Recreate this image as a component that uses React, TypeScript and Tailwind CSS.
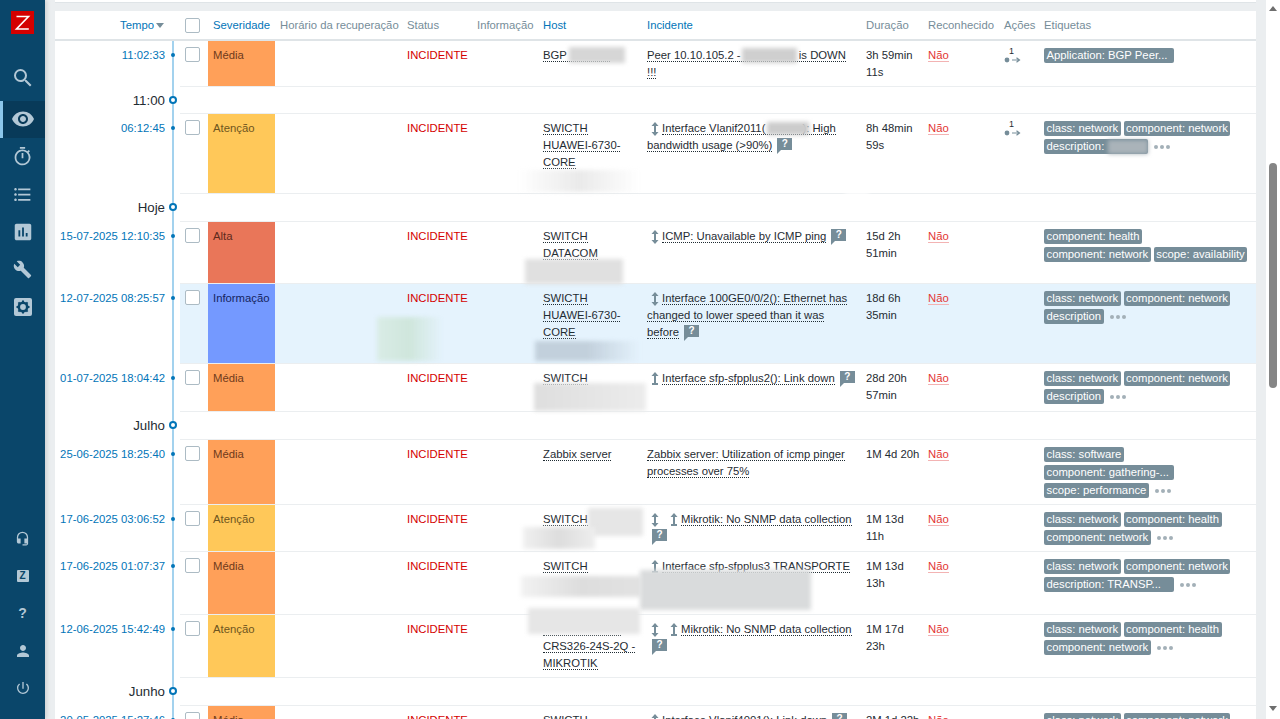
import * as React from "react"
import {
  MdSearch,
  MdVisibility,
  MdOutlineTimer,
  MdFormatListBulleted,
  MdAssessment,
  MdBuild,
  MdHeadsetMic,
  MdPerson,
  MdPowerSettingsNew,
} from "react-icons/md"

const COLS =
  "grid grid-cols-[28px_67px_127px_70px_66px_104px_219px_62px_76px_40px_217px]"

const SEV: Record<string, string> = {
  Média: "bg-[#ffa059] text-[#6e3a1c]",
  Atenção: "bg-[#ffc859] text-[#6e5520]",
  Alta: "bg-[#e97659] text-[#5e2a1c]",
  Informação: "bg-[#7499ff] text-[#14245e]",
}

function Link({ children }: { children: React.ReactNode }) {
  return <span className="border-b border-dotted border-[#1f2c33]">{children}</span>
}

function Gap({ className }: { className: string }) {
  return <span className={`inline-block ${className}`} />
}

function UpDown() {
  return (
    <svg viewBox="0 0 8 14" className="-my-[3px] mr-[3px] ml-[4px] inline-block h-[14px] w-[8px] align-[-1px]">
      <path d="M4 0 L7.5 4 H5 V10 H7.5 L4 14 L0.5 10 H3 V4 H0.5 Z" fill="#768d99" />
    </svg>
  )
}

function Up() {
  return (
    <svg viewBox="0 0 8 14" className="-my-[3px] mr-[3px] ml-[4px] inline-block h-[14px] w-[8px] align-[-1px]">
      <path d="M4 0 L7.5 4 H5 V11 H7 V13 H1 V11 H3 V4 H0.5 Z" fill="#768d99" />
    </svg>
  )
}

function Hint() {
  return (
    <span className="relative ml-[5px] inline-block h-[12px] w-[15px] bg-[#768d99] text-center align-[2px] text-[10px] leading-[12px] font-bold text-white after:absolute after:top-full after:left-0 after:border-t-[4px] after:border-r-[4px] after:border-t-[#768d99] after:border-r-transparent after:content-['']">
      ?
    </span>
  )
}

function Tag({ children, className = "" }: { children: React.ReactNode; className?: string }) {
  return (
    <span className={`block h-[15px] overflow-hidden rounded-[2px] bg-[#768d99] px-[2.5px] leading-[15px] whitespace-nowrap text-white ${className}`}>
      {children}
    </span>
  )
}

function More() {
  return (
    <span className="ml-[3px] flex h-[15px] items-center gap-[2px]">
      <i className="size-[4px] rounded-full bg-[#a3b0b8]" />
      <i className="size-[4px] rounded-full bg-[#a3b0b8]" />
      <i className="size-[4px] rounded-full bg-[#a3b0b8]" />
    </span>
  )
}

function Actions() {
  return (
    <div className="relative h-[20px] w-[18px]">
      <span className="absolute top-[-2px] left-[5px] text-[9px] leading-[12px] text-[#1f2c33]">1</span>
      <svg viewBox="0 0 18 8" className="absolute top-[9px] left-0 h-[8px] w-[18px]">
        <circle cx="3" cy="4" r="2.4" fill="#768d99" />
        <path d="M8 4 H15 M12.5 1.8 L15.5 4 L12.5 6.2" stroke="#768d99" strokeWidth="1.2" fill="none" />
      </svg>
    </div>
  )
}

type Row = {
  h: string
  time: string
  sev: string
  host: React.ReactNode
  inc: React.ReactNode
  dur: React.ReactNode
  acts?: boolean
  tags: React.ReactNode
  active?: boolean
}

const rows: (Row | { sep: string; h: string })[] = [
  {
    h: "h-[46px]",
    time: "11:02:33",
    sev: "Média",
    host: (
      <Link>
        BGP <Gap className="w-[40px]" />
      </Link>
    ),
    inc: (
      <Link>
        Peer 10.10.105.2 - <Gap className="w-[52px]" /> is DOWN
        <br />
        !!!
      </Link>
    ),
    dur: "3h 59min 11s",
    acts: true,
    tags: <Tag className="w-[130px]">Application: BGP Peer...</Tag>,
  },
  { sep: "11:00", h: "h-[27px]" },
  {
    h: "h-[80px]",
    time: "06:12:45",
    sev: "Atenção",
    host: <Link>SWICTH HUAWEI-6730-CORE</Link>,
    inc: (
      <>
        <UpDown />
        <Link>
          Interface Vlanif2011(<Gap className="w-[37px]" />
          ): High bandwidth usage (&gt;90%)
        </Link>
        <Hint />
      </>
    ),
    dur: "8h 48min 59s",
    acts: true,
    tags: (
      <>
        <Tag>class: network</Tag>
        <Tag>component: network</Tag>
        <Tag className="w-[104px]">description:</Tag>
        <More />
      </>
    ),
  },
  { sep: "Hoje", h: "h-[28px]" },
  {
    h: "h-[62px]",
    time: "15-07-2025 12:10:35",
    sev: "Alta",
    host: <Link>SWITCH DATACOM</Link>,
    inc: (
      <>
        <UpDown />
        <Link>ICMP: Unavailable by ICMP ping</Link>
        <Hint />
      </>
    ),
    dur: "15d 2h 51min",
    tags: (
      <>
        <Tag>component: health</Tag>
        <Tag>component: network</Tag>
        <Tag>scope: availability</Tag>
      </>
    ),
  },
  {
    h: "h-[80px]",
    time: "12-07-2025 08:25:57",
    sev: "Informação",
    active: true,
    host: <Link>SWICTH HUAWEI-6730-CORE</Link>,
    inc: (
      <>
        <UpDown />
        <Link>Interface 100GE0/0/2(): Ethernet has changed to lower speed than it was before</Link>
        <Hint />
      </>
    ),
    dur: "18d 6h 35min",
    tags: (
      <>
        <Tag>class: network</Tag>
        <Tag>component: network</Tag>
        <Tag>description</Tag>
        <More />
      </>
    ),
  },
  {
    h: "h-[48px]",
    time: "01-07-2025 18:04:42",
    sev: "Média",
    host: <Link>SWITCH</Link>,
    inc: (
      <>
        <Up />
        <Link>Interface sfp-sfpplus2(): Link down</Link>
        <Hint />
      </>
    ),
    dur: "28d 20h 57min",
    tags: (
      <>
        <Tag>class: network</Tag>
        <Tag>component: network</Tag>
        <Tag>description</Tag>
        <More />
      </>
    ),
  },
  { sep: "Julho", h: "h-[28px]" },
  {
    h: "h-[65px]",
    time: "25-06-2025 18:25:40",
    sev: "Média",
    host: <Link>Zabbix server</Link>,
    inc: <Link>Zabbix server: Utilization of icmp pinger processes over 75%</Link>,
    dur: "1M 4d 20h",
    tags: (
      <>
        <Tag>class: software</Tag>
        <Tag className="w-[130px]">component: gathering-...</Tag>
        <Tag>scope: performance</Tag>
        <More />
      </>
    ),
  },
  {
    h: "h-[47px]",
    time: "17-06-2025 03:06:52",
    sev: "Atenção",
    host: <Link>SWITCH</Link>,
    inc: (
      <>
        <UpDown />
        <Gap className="w-[4px]" />
        <Up />
        <Link>Mikrotik: No SNMP data collection</Link>
        <Hint />
      </>
    ),
    dur: "1M 13d 11h",
    tags: (
      <>
        <Tag>class: network</Tag>
        <Tag>component: health</Tag>
        <Tag>component: network</Tag>
        <More />
      </>
    ),
  },
  {
    h: "h-[63px]",
    time: "17-06-2025 01:07:37",
    sev: "Média",
    host: <Link>SWITCH</Link>,
    inc: (
      <>
        <Up />
        <Link>Interface sfp-sfpplus3 TRANSPORTE</Link>
      </>
    ),
    dur: "1M 13d 13h",
    tags: (
      <>
        <Tag>class: network</Tag>
        <Tag>component: network</Tag>
        <Tag className="w-[130px]">description: TRANSP...</Tag>
        <More />
      </>
    ),
  },
  {
    h: "h-[63px]",
    time: "12-06-2025 15:42:49",
    sev: "Atenção",
    host: (
      <Link>
        <Gap className="w-[78px]" /> CRS326-24S-2Q - MIKROTIK
      </Link>
    ),
    inc: (
      <>
        <UpDown />
        <Gap className="w-[4px]" />
        <Up />
        <Link>Mikrotik: No SNMP data collection</Link>
        <Hint />
      </>
    ),
    dur: "1M 17d 23h",
    tags: (
      <>
        <Tag>class: network</Tag>
        <Tag>component: health</Tag>
        <Tag>component: network</Tag>
        <More />
      </>
    ),
  },
  { sep: "Junho", h: "h-[28px]" },
  {
    h: "h-[48px]",
    time: "20-05-2025 15:27:46",
    sev: "Média",
    host: <Link>SWICTH</Link>,
    inc: (
      <>
        <Up />
        <Link>Interface Vlanif4001(): Link down</Link>
        <Hint />
      </>
    ),
    dur: "2M 1d 22h",
    tags: (
      <>
        <Tag>class: network</Tag>
        <Tag>component: network</Tag>
      </>
    ),
  },
]

// blurred patches from the original screenshot
const redactions = [
  "left-[569px] top-[47px] h-[16px] w-[56px] bg-[#d6d6d6]",
  "left-[742px] top-[48px] h-[15px] w-[55px] bg-[#cfcfcf]",
  "left-[767px] top-[122px] h-[13px] w-[42px] bg-[#cccccc]",
  "left-[1108px] top-[140px] h-[14px] w-[40px] bg-[#aab3b9]",
  "left-[518px] top-[170px] h-[22px] w-[122px] bg-linear-to-r from-transparent via-[#eaeaea] to-transparent",
  "left-[845px] top-[178px] h-[16px] w-[24px] bg-white",
  "left-[525px] top-[259px] h-[25px] w-[98px] bg-[#e0e0e0]",
  "left-[377px] top-[317px] h-[44px] w-[66px] bg-linear-to-r from-[#d9ece6] via-[#cfe6dc] to-transparent",
  "left-[535px] top-[341px] h-[20px] w-[105px] bg-linear-to-r from-[#c2d0dc] via-[#c2d0dc] to-transparent",
  "left-[534px] top-[383px] h-[28px] w-[112px] bg-linear-to-r from-[#dedede] to-[#ececec]",
  "left-[588px] top-[508px] h-[28px] w-[55px] bg-[#e6e6e6]",
  "left-[523px] top-[527px] h-[22px] w-[72px] bg-linear-to-r from-[#f0f0f0] via-[#dddddd] to-[#eeeeee]",
  "left-[521px] top-[576px] h-[21px] w-[120px] bg-linear-to-r from-[#f2f2f2] via-[#dddddd] to-[#e2e2e2]",
  "left-[640px] top-[570px] h-[40px] w-[171px] bg-[#d9dbdc]",
  "left-[528px] top-[608px] h-[26px] w-[112px] bg-[#e6e6e6]",
]

function NavItem({ children, active }: { children: React.ReactNode; active?: boolean }) {
  return (
    <div
      className={`flex h-[37.5px] items-center justify-center text-[#b3c8d6] ${
        active ? "border-l-[3px] border-[#8cc6ea] bg-[#083a59] pr-[3px]" : ""
      }`}
    >
      {children}
    </div>
  )
}

function Sidebar() {
  return (
    <aside className="z-10 flex h-full w-[45px] shrink-0 flex-col bg-[#0a466a] shadow-[2px_0_4px_rgba(0,0,0,0.12)]">
      <svg viewBox="0 0 23 23" className="mx-auto mt-[11px] size-[23px] shrink-0">
        <rect width="23" height="23" fill="#d40000" />
        <path d="M5.5 5.5 H17.5 L5.5 18 H17.8" fill="none" stroke="#fff" strokeWidth="1.6" />
      </svg>
      <div className="mt-[25px] mb-[4px]">
        <NavItem>
          <MdSearch size={24} />
        </NavItem>
      </div>
      <NavItem active>
        <MdVisibility size={24} />
      </NavItem>
      <NavItem>
        <MdOutlineTimer size={21} />
      </NavItem>
      <NavItem>
        <MdFormatListBulleted size={21} />
      </NavItem>
      <NavItem>
        <MdAssessment size={22} />
      </NavItem>
      <NavItem>
        <MdBuild size={19} />
      </NavItem>
      <NavItem>
        <svg viewBox="0 0 18 18" className="size-[18px]">
          <rect width="18" height="18" rx="2" fill="currentColor" />
          <circle cx="9" cy="9" r="4.2" fill="none" stroke="#0a466a" strokeWidth="2.6" />
          <path d="M9 2.5v2M9 13.5v2M2.5 9h2M13.5 9h2M4.4 4.4l1.4 1.4M12.2 12.2l1.4 1.4M13.6 4.4l-1.4 1.4M5.8 12.2l-1.4 1.4" stroke="#0a466a" strokeWidth="2" />
        </svg>
      </NavItem>
      <div className="mt-auto pb-[12px]">
        <NavItem>
          <MdHeadsetMic size={15} />
        </NavItem>
        <NavItem>
          <span className="flex size-[12px] items-center justify-center rounded-[1px] bg-[#b3c8d6] text-[10px] leading-none font-bold text-[#0a466a]">
            Z
          </span>
        </NavItem>
        <NavItem>
          <span className="text-[14px] font-bold">?</span>
        </NavItem>
        <NavItem>
          <MdPerson size={18} />
        </NavItem>
        <NavItem>
          <MdPowerSettingsNew size={16} />
        </NavItem>
      </div>
    </aside>
  )
}

function Rail({ ring }: { ring?: boolean }) {
  return (
    <div className="relative flex w-[14px] shrink-0 justify-center">
      <div className="h-full w-[2px] bg-[#a3d2ee]" />
      {ring ? (
        <span className="absolute top-[9px] left-[3px] size-[8px] rounded-full border-2 border-[#0275b8] bg-white" />
      ) : (
        <span className="absolute top-[12px] left-[5px] size-[4px] rounded-full bg-[#0275b8]" />
      )}
    </div>
  )
}

export default function App() {
  return (
    <div className="relative flex h-[719px] w-[1280px] overflow-hidden bg-[#ebeef0] font-['Liberation_Sans',Arial,sans-serif] text-[11.3px] leading-[17px] text-[#1f2c33]">
      <Sidebar />
      <main className="w-[1221px] shrink-0 px-[10px]">
        <div className="mb-[8px] h-[3px] border-b border-[#dfe4e7] bg-white" />
        <section className="bg-white">
          <div className="flex h-[30px] items-center border-b-2 border-[#dfe4e7]">
            <div className="flex w-[125px] shrink-0 items-center justify-end pr-[16px] text-[#0275b8]">
              Tempo
              <span className="mt-[1px] ml-[2px] border-x-[4px] border-t-[5px] border-x-transparent border-t-[#768d99]" />
            </div>
            <div className={`${COLS} flex-1 items-center whitespace-nowrap text-[#768d99]`}>
              <div className="pl-[5px]">
                <span className="block size-[15px] rounded-[2px] border border-[#acbbc4] bg-white" />
              </div>
              <div className="pl-[5px] text-[#0275b8]">Severidade</div>
              <div className="pl-[5px]">Horário da recuperação</div>
              <div className="pl-[5px]">Status</div>
              <div className="pl-[5px]">Informação</div>
              <div className="pl-[5px] text-[#0275b8]">Host</div>
              <div className="pl-[5px] text-[#0275b8]">Incidente</div>
              <div className="pl-[5px]">Duração</div>
              <div className="pl-[5px]">Reconhecido</div>
              <div className="pl-[5px]">Ações</div>
              <div className="pl-[5px]">Etiquetas</div>
            </div>
          </div>
          {rows.map((r, i) =>
            "sep" in r ? (
              <div key={i} className={`flex ${r.h}`}>
                <div className="w-[111px] shrink-0 pt-[5px] pr-[1px] text-right text-[13.3px] leading-[17px]">
                  {r.sep}
                </div>
                <Rail ring />
                <div className="flex-1 border-b border-[#ebeef0]" />
              </div>
            ) : (
              <div key={i} className={`flex ${r.h}`}>
                <div className="w-[111px] shrink-0 pt-[6px] pr-[1px] text-right whitespace-nowrap text-[#0275b8]">{r.time}</div>
                <Rail />
                <div className={`${COLS} flex-1 border-b border-[#ebeef0] ${r.active ? "bg-[#e5f3fd]" : ""}`}>
                  <div className="pt-[6px] pl-[5px]">
                    <span className="block size-[15px] rounded-[2px] border border-[#acbbc4] bg-white" />
                  </div>
                  <div className={`pt-[6px] pl-[5px] ${SEV[r.sev]}`}>{r.sev}</div>
                  <div />
                  <div className="pt-[6px] pl-[5px] text-[#d40000]">INCIDENTE</div>
                  <div />
                  <div className="pt-[6px] pr-[5px] pl-[5px]">{r.host}</div>
                  <div className="pt-[6px] pr-[5px] pl-[5px]">{r.inc}</div>
                  <div className="pt-[6px] pl-[5px]">{r.dur}</div>
                  <div className="pt-[6px] pl-[5px]">
                    <span className="border-b border-[#f3b3b3] text-[#e33734]">Não</span>
                  </div>
                  <div className="pt-[6px] pl-[5px]">{r.acts && <Actions />}</div>
                  <div className="flex flex-wrap content-start items-center gap-[3px] pt-[7px] pr-[8px] pl-[5px]">{r.tags}</div>
                </div>
              </div>
            )
          )}
        </section>
      </main>
      <div className="relative w-[14px] shrink-0 bg-white">
        <span className="absolute top-[6px] left-[3px] border-x-[4px] border-b-[5px] border-x-transparent border-b-[#6e6e6e]" />
        <span className="absolute top-[163px] left-[3px] h-[225px] w-[8px] rounded-[4px] bg-[#858585]" />
        <span className="absolute top-[706px] left-[3px] border-x-[4px] border-t-[5px] border-x-transparent border-t-[#6e6e6e]" />
      </div>
      {redactions.map((c) => (
        <div key={c} className={`absolute blur-[2px] ${c}`} />
      ))}
    </div>
  )
}
